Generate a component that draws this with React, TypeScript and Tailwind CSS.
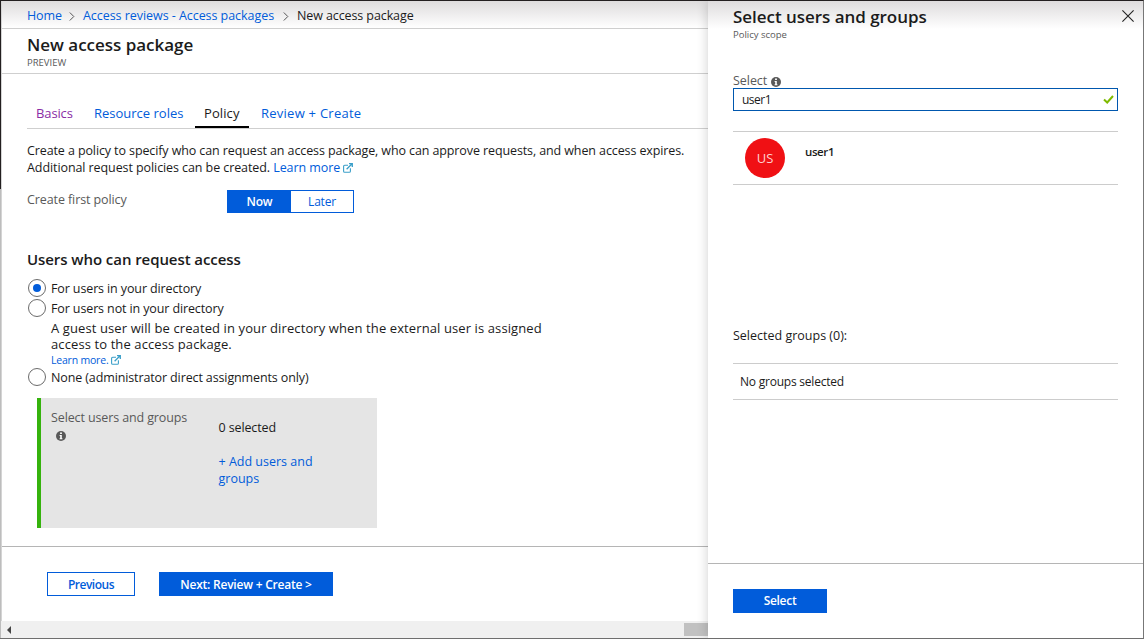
import type { ReactNode } from "react";

function Chevron() {
  return (
    <svg width="6" height="9" viewBox="0 0 6 9" fill="none" stroke="#555" strokeWidth="1">
      <path d="M.8 0.5 4.8 4.5.8 8.5" />
    </svg>
  );
}

function ExternalIcon() {
  return (
    <svg width="10" height="10" viewBox="0 0 10 10" fill="none" stroke="#3a9fc9" strokeWidth="1.1" className="shrink-0">
      <path d="M5 2.3H1.7Q.6 2.3.6 3.4V8.2Q.6 9.3 1.7 9.3H6.3Q7.4 9.3 7.4 8.2V5.2" />
      <path d="M3.6 6.3 8.6 1.3M6 .7H9.3V4" strokeWidth="1.3" />
    </svg>
  );
}

function InfoIcon() {
  return (
    <svg width="10" height="10" viewBox="0 0 10 10" className="shrink-0">
      <circle cx="5" cy="5" r="5" fill="#595959" />
      <path d="M4.1 1.6H5.9V3.1H4.1ZM3.6 4H5.8V7.3H6.4V8.2H3.6V7.3H4.2V4.9H3.6Z" fill="#fff" />
    </svg>
  );
}

function Radio({ checked = false }: { checked?: boolean }) {
  return (
    <span className="flex size-[18px] shrink-0 items-center justify-center rounded-full border border-[#6b6b6b] bg-white">
      {checked && <span className="size-2 rounded-full bg-[#015cda]" />}
    </span>
  );
}

function Option({ checked, children }: { checked?: boolean; children: ReactNode }) {
  return (
    <div className="flex h-5 items-center gap-[5px] tracking-[-0.12px]">
      <Radio checked={checked} />
      <span className="pt-[2px]">{children}</span>
    </div>
  );
}

function MainBlade() {
  return (
    <main className="flex w-[707px] shrink-0 flex-col border-l border-[#d4d4d4]">
      <nav className="flex h-[28px] items-center border-b border-[#cfcfcf] bg-linear-to-b from-[#dedcdd] to-white pt-[3px] pl-[25px] text-[12.5px] tracking-[-0.13px]">
        <a className="w-[42px] text-[#015cda]">Home</a>
        <Chevron />
        <a className="mr-[8px] ml-[8px] w-[192px] tracking-[-0.05px] whitespace-nowrap text-[#015cda]">Access reviews - Access packages</a>
        <Chevron />
        <span className="ml-[8px] tracking-[-0.1px]">New access package</span>
      </nav>
      <header className="h-[45px] border-b border-[#cfcfcf] pt-[5px] pl-[25px]">
        <h1 className="text-[17px] leading-[22px] font-semibold tracking-[-0.02px]">New access package</h1>
        <p className="pt-px text-[9.5px] leading-[12px] text-[#595959]">PREVIEW</p>
      </header>
      <div className="flex flex-1 flex-col pt-[25px] pl-[25px]">
        <div className="flex h-[30px] border-b border-[#cfcfcf] text-[13px]">
          <span className="w-[58px] pt-[5px] pl-[9px] tracking-[-0.12px] text-[#8a2da5]">Basics</span>
          <span className="w-[110px] pt-[5px] pl-[9px] text-[#015cda]">Resource roles</span>
          <span className="h-[29px] w-[54px] border-b-2 border-black pt-[5px] pl-[9px] tracking-[0.1px]">Policy</span>
          <span className="pt-[5px] pl-[12px] tracking-[0.25px] text-[#015cda]">Review + Create</span>
        </div>
        <p className="mt-[13px] text-[12.5px] leading-[17px] tracking-[-0.107px] whitespace-nowrap">
          Create a policy to specify who can request an access package, who can approve requests, and when access expires.
        </p>
        <p className="flex items-center gap-[3px] text-[12.5px] leading-[17px] tracking-[-0.085px]">
          <span>
            Additional request policies can be created. <a className="text-[#015cda]">Learn more</a>
          </span>
          <ExternalIcon />
        </p>
        <div className="mt-[14px] flex h-[23px] text-[12.5px]">
          <span className="w-[200px] pt-px tracking-[-0.1px] text-[#595959]">Create first policy</span>
          <div className="flex w-[127px] border border-[#015cda] text-center text-[12px] leading-[22px]">
            <span className="w-[63px] bg-[#015cda] font-semibold tracking-[-0.2px] text-white">Now</span>
            <span className="flex-1 tracking-[-0.2px] text-[#015cda]">Later</span>
          </div>
        </div>
        <h2 className="mt-[36px] text-[15px] leading-[20px] font-semibold tracking-[-0.07px]">Users who can request access</h2>
        <div className="mt-[9px] pl-px text-[12.5px]">
          <Option checked>For users in your directory</Option>
          <Option>For users not in your directory</Option>
          <div className="pt-[2px] pl-[23px]">
            <p className="text-[13px] leading-[16px] tracking-[0.105px] whitespace-nowrap">
              A guest user will be created in your directory when the external user is assigned
              <br />
              access to the access package.
            </p>
            <p className="flex h-[15px] items-center gap-[3px] text-[10.5px] tracking-[-0.2px] text-[#015cda]">
              <span className="pt-[2px]">Learn more.</span>
              <ExternalIcon />
            </p>
          </div>
          <Option>None (administrator direct assignments only)</Option>
        </div>
        <section className="mt-[11px] ml-[10px] flex h-[130px] w-[340px] border-l-4 border-[#35b30d] bg-[#e5e5e5] pl-[10px] text-[12.5px] leading-[17px]">
          <div className="w-[167.5px] pt-[11px] tracking-[-0.12px] text-[#595959]">
            Select users and groups
            <div className="pt-[5px] pl-[5px]">
              <InfoIcon />
            </div>
          </div>
          <div className="w-[110px] pt-[21px]">
            <p className="tracking-[-0.12px]">0 selected</p>
            <a className="mt-[17px] block text-[#015cda]">+ Add users and groups</a>
          </div>
        </section>
      </div>
      <footer className="flex h-[75px] shrink-0 gap-[24px] border-t border-[#b5b5b5] pt-[25px] pl-[45px] text-[12px] font-semibold">
        <button className="h-[24px] w-[88px] border border-[#015cda] pt-px tracking-[-0.5px] text-[#015cda]">Previous</button>
        <button className="h-[24px] w-[174px] bg-[#015cda] pt-[2px] tracking-[-0.22px] text-white">Next: Review + Create &gt;</button>
      </footer>
      <div className="-ml-px flex h-[17px] shrink-0 items-center justify-between bg-[#f0f0f0] pl-[6px]">
        <svg width="4" height="8" viewBox="0 0 4 8" fill="#444">
          <path d="M4 0V8L0 4Z" />
        </svg>
        <span className="h-[13px] w-[24px] bg-[#c1c1c1]" />
      </div>
    </main>
  );
}

function SelectPanel() {
  return (
    <aside className="z-10 flex flex-1 flex-col bg-white shadow-[-1px_0_10px_rgba(0,0,0,0.17)]">
      <header className="flex h-[72px] justify-between bg-linear-to-b from-[#dedcdd] to-transparent to-[28px] pr-[9px] pl-[25px]">
        <div className="pt-[5px]">
          <h2 className="text-[17px] leading-[22px] font-semibold tracking-[-0.04px]">Select users and groups</h2>
          <p className="pt-px text-[9.5px] leading-[12px] text-[#595959]">Policy scope</p>
        </div>
        <svg width="12" height="12" viewBox="0 0 12 12" stroke="#222" strokeWidth="1.1" className="mt-[9px]">
          <path d="M.4.4 11.6 11.6M11.6.4.4 11.6" />
        </svg>
      </header>
      <div className="flex-1 pr-[25px] pl-[25px] text-[12.5px]">
        <label className="flex h-[15px] items-center gap-[4px] pt-[2px] tracking-[-0.05px] text-[#595959]">
          Select <InfoIcon />
        </label>
        <div className="flex h-[23px] items-center justify-between border border-[#0057ae] pr-[3px] pl-[8px] text-[12px]">
          <span className="tracking-[-0.5px]">user1</span>
          <svg width="11" height="9" viewBox="0 0 11 9" fill="none" stroke="#7fba00" strokeWidth="2">
            <path d="M1 4.5 4.2 7.5 10 1" />
          </svg>
        </div>
        <div className="mt-[20px] flex h-[54px] border-y border-[#cccccc] pt-[6px] pl-[12px]">
          <span className="size-10 rounded-full bg-[#f01014] text-center text-[13px] leading-[40px] text-[#ffd0d0]">US</span>
          <span className="ml-[20px] pt-[5px] text-[11.5px] leading-[17px] font-semibold tracking-[-0.4px]">user1</span>
        </div>
        <p className="mt-[142px] leading-[18px]">Selected groups (0):</p>
        <p className="mt-[18px] h-[37px] border-y border-[#cccccc] pl-[7px] text-[12px] leading-[36px] tracking-[-0.22px]">No groups selected</p>
      </div>
      <footer className="h-[75px] shrink-0 border-t border-[#b5b5b5] pt-[25px] pl-[25px]">
        <button className="block h-[24px] w-[94px] bg-[#015cda] text-[12px] font-semibold tracking-[-0.3px] text-white">Select</button>
      </footer>
    </aside>
  );
}

export default function App() {
  return (
    <div className="flex h-[639px] w-[1144px] flex-col overflow-hidden border-t border-r border-b border-t-[#231f20] border-r-[#777] border-b-[#6e6e6e] bg-white font-['Open_Sans','Noto_Sans',sans-serif] text-[#1b1b1b]">
      <div className="flex flex-1">
        <div className="flex w-px flex-col bg-[#bdbdbd]">
          <span className="h-[188px] bg-[#231f20]" />
        </div>
        <MainBlade />
        <SelectPanel />
      </div>
    </div>
  );
}
